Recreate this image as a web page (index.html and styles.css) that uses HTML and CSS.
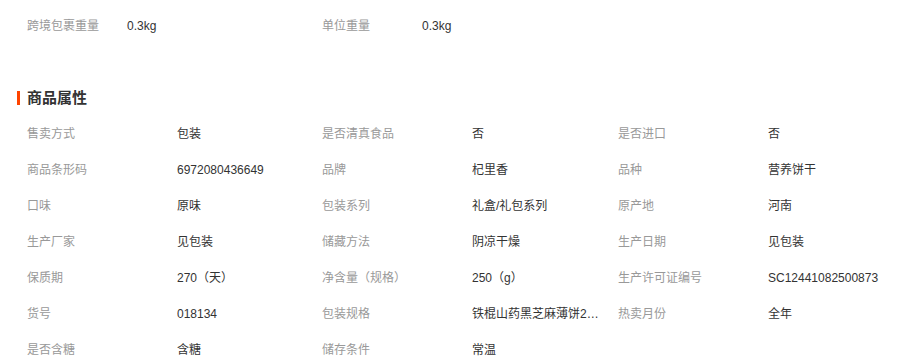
FILE: index.html
```html
<!DOCTYPE html>
<html lang="zh-CN">
<head>
<meta charset="utf-8">
<link rel="stylesheet" href="styles.css">
</head>
<body>
<div class="page">
  <div class="weights">
    <span class="wl">跨境包裹重量</span><span class="wv">0.3kg</span>
    <span class="wl">单位重量</span><span class="wv">0.3kg</span>
  </div>
  <h2 class="title">商品属性</h2>
  <div class="attrs">
    <span class="l">售卖方式</span><span class="v">包装</span>
    <span class="l">是否清真食品</span><span class="v">否</span>
    <span class="l">是否进口</span><span class="v last">否</span>

    <span class="l">商品条形码</span><span class="v">6972080436649</span>
    <span class="l">品牌</span><span class="v">杞里香</span>
    <span class="l">品种</span><span class="v last">营养饼干</span>

    <span class="l">口味</span><span class="v">原味</span>
    <span class="l">包装系列</span><span class="v">礼盒/礼包系列</span>
    <span class="l">原产地</span><span class="v last">河南</span>

    <span class="l">生产厂家</span><span class="v">见包装</span>
    <span class="l">储藏方法</span><span class="v">阴凉干燥</span>
    <span class="l">生产日期</span><span class="v last">见包装</span>

    <span class="l">保质期</span><span class="v">270（天）</span>
    <span class="l">净含量（规格）</span><span class="v">250（g）</span>
    <span class="l">生产许可证编号</span><span class="v last">SC12441082500873</span>

    <span class="l">货号</span><span class="v">018134</span>
    <span class="l">包装规格</span><span class="v">铁棍山药黑芝麻薄饼250g</span>
    <span class="l">热卖月份</span><span class="v last">全年</span>

    <span class="l">是否含糖</span><span class="v">含糖</span>
    <span class="l">储存条件</span><span class="v">常温</span>
  </div>
</div>
</body>
</html>
```

FILE: styles.css
```css
html, body {
  margin: 0;
  padding: 0;
  background: #fff;
}
body {
  font-family: "Liberation Sans", "Noto Sans CJK SC", sans-serif;
  font-size: 12px;
}
.page {
  padding: 8px 0 0 27px;
}
.weights {
  display: grid;
  grid-template-columns: 100px 195px 100px auto;
  line-height: 36px;
  height: 36px;
}
.wl { color: #999; }
.wv { color: #333; }
.title {
  margin: 47px 0 0 -10px;
  padding-left: 7px;
  border-left: 3px solid #ff4400;
  font-size: 15px;
  font-weight: bold;
  color: #333;
  line-height: 14px;
  height: 14px;
}
.attrs {
  margin-top: 11px;
  display: grid;
  grid-template-columns: 150px 145px 150px 146px 150px 1fr;
  line-height: 36px;
}
.l {
  color: #999;
  white-space: nowrap;
}
.v {
  color: #333;
  white-space: nowrap;
  overflow: hidden;
  text-overflow: ellipsis;
  padding-right: 16px;
}
.v.last {
  overflow: visible;
  padding-right: 0;
}
```
